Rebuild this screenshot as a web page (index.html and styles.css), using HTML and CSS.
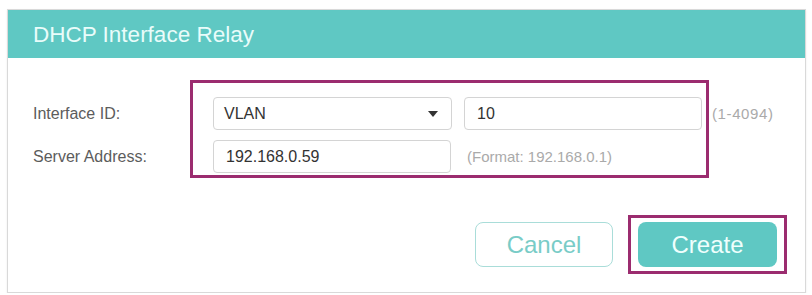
FILE: index.html
```html
<!DOCTYPE html>
<html lang="en">

<head>
  <meta charset="UTF-8">
  <meta name="viewport" content="width=device-width, initial-scale=1.0">
  <title>DHCP Interface Relay</title>
  <link rel="stylesheet" href="styles.css">
</head>

<body>
  <div class="dialog">
    <div class="dialog-title">DHCP Interface Relay</div>

    <div class="dialog-body">
      <div class="form">
        <div class="labels">
          <div class="label">Interface ID:</div>
          <div class="label">Server Address:</div>
        </div>

        <div class="mark-box">
          <div class="field-row">
            <div class="select">
              <span>VLAN</span>
              <span class="arrow"></span>
            </div>
            <input class="text-input" type="text" value="10">
          </div>
          <div class="field-row">
            <input class="text-input" type="text" value="192.168.0.59">
            <span class="hint hint-format">(Format: 192.168.0.1)</span>
          </div>
        </div>

        <div class="hint hint-range">(1-4094)</div>
      </div>

      <div class="actions">
        <button class="button button-cancel">Cancel</button>
        <div class="mark-button">
          <button class="button button-create">Create</button>
        </div>
      </div>
    </div>
  </div>
</body>

</html>
```

FILE: styles.css
```css
html,
body {
  margin: 0;
  padding: 0;
  background: #fff;
  font-family: "Liberation Sans", Arial, sans-serif;
  color: #333;
}

.dialog {
  margin: 9px 0 0 7px;
  width: 799px;
  height: 284px;
  box-sizing: border-box;
  border: 1px solid #d9d9d9;
  box-shadow: 0 1px 2px rgba(0, 0, 0, .08);
  display: flex;
  flex-direction: column;
}

.dialog-title {
  height: 48px;
  box-sizing: border-box;
  padding: 2px 0 0 25px;
  background-color: #5fc8c3;
  color: #e9fcfa;
  font-size: 22.5px;
  display: flex;
  align-items: center;
}

.dialog-body {
  padding: 22px 0 0 25px;
}

.form {
  display: flex;
  align-items: flex-start;
}

.labels {
  width: 157px;
  padding-top: 17px;
  display: flex;
  flex-direction: column;
  gap: 10px;
}

.label {
  height: 33px;
  line-height: 33px;
  font-size: 16px;
  color: #5c5c5c;
}

/* 紫色标注框 */
.mark-box {
  border: 3px solid #9b2c6f;
  padding: 14px 4px 2px 20px;
  display: flex;
  flex-direction: column;
  gap: 10px;
}

.field-row {
  display: flex;
  align-items: center;
  gap: 12px;
}

.select,
.text-input {
  height: 33px;
  box-sizing: border-box;
  border: 1px solid #d4d4d4;
  border-radius: 4px;
  background: #fff;
  font-family: inherit;
  font-size: 16px;
  color: #333;
}

.select {
  width: 239px;
  padding: 0 13px 0 10px;
  display: flex;
  align-items: center;
  justify-content: space-between;
}

.arrow {
  width: 0;
  height: 0;
  border-left: 5px solid transparent;
  border-right: 5px solid transparent;
  border-top: 6px solid #333;
}

.text-input {
  width: 238px;
  padding: 0 12px;
  outline: none;
}

.hint {
  font-size: 15px;
  color: #aaa;
}

.hint-format {
  margin-left: 4px;
}

.hint-range {
  margin-left: 3px;
  padding-top: 17px;
  line-height: 33px;
  letter-spacing: .6px;
}

.actions {
  margin-top: 37px;
  padding-right: 18px;
  display: flex;
  justify-content: flex-end;
  align-items: center;
  gap: 15px;
}

.button {
  width: 139px;
  height: 45px;
  box-sizing: border-box;
  border-radius: 8px;
  font-family: inherit;
  font-size: 24px;
  cursor: pointer;
}

.button-cancel {
  width: 138px;
  background: #fff;
  border: 1px solid #a9ddd9;
  color: #79ccc7;
}

.mark-button {
  border: 3px solid #9b2c6f;
  padding: 4px 7px;
  display: flex;
}

.button-create {
  background-color: #5fc8c3;
  border: none;
  color: #effffd;
}
```
